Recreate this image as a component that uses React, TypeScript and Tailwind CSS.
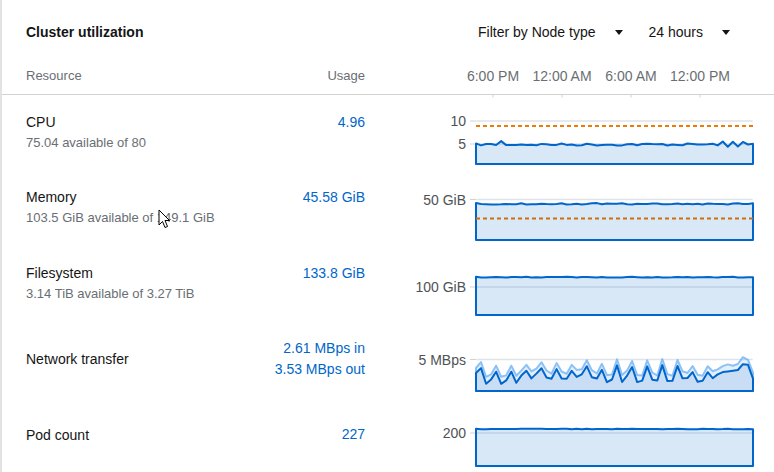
import React from 'react';

const X0 = 76;
const X1 = 353;
const BLUE = '#0066cc';

// deterministic noise so the charts look the same on every render
function rng(seed: number) {
  let s = seed;
  return () => {
    s = (s * 16807) % 2147483647;
    return (s - 1) / 2147483646;
  };
}

function makeSeries(n: number, base: number, amp: number, seed: number, extras: Record<number, number> = {}) {
  const r = rng(seed);
  return Array.from({ length: n }, (_, i) => base + (r() - 0.5) * 2 * amp + (extras[i] ?? 0));
}

function toPoints(ys: number[]) {
  const step = (X1 - X0) / (ys.length - 1);
  return ys.map((y, i) => `${(X0 + i * step).toFixed(1)},${y.toFixed(1)}`).join(' L');
}

function areaPath(ys: number[], bottom: number) {
  return `M${X0},${bottom} L${toPoints(ys)} L${X1},${bottom} Z`;
}

type Grid = { y: number; label: string };

type ChartProps = {
  grid: Grid[];
  series: { ys: number[]; stroke: string; opacity: number }[];
  threshold?: { y: number; color: string };
  ticks?: boolean;
  bottom?: number;
};

const Chart = ({ grid, series, threshold, ticks, bottom = 69 }: ChartProps) => (
  <svg width="374" height="75.5" className="block overflow-visible">
    {ticks &&
      [93, 162, 231, 300].map((x) => (
        <line key={x} x1={x} x2={x} y1={-1} y2={2.5} stroke="#d2d2d2" strokeWidth="1" />
      ))}
    {grid.map((g) => (
      <g key={g.label}>
        <line x1={70} x2={X0} y1={g.y} y2={g.y} stroke="#d2d2d2" strokeWidth="1" />
        <line x1={X0} x2={X1} y1={g.y} y2={g.y} stroke="#ececec" strokeWidth="1.5" />
        <text
          x={66}
          y={g.y + 5}
          textAnchor="end"
          fontSize="14"
          fill="#4f5255"
          fontFamily="'Liberation Sans', Arial, sans-serif"
        >
          {g.label}
        </text>
      </g>
    ))}
    {series.map((s, i) => (
      <path
        key={i}
        d={areaPath(s.ys, bottom)}
        fill={BLUE}
        fillOpacity={s.opacity}
        stroke={s.stroke}
        strokeWidth="2"
        strokeLinejoin="round"
      />
    ))}
    {grid.map((g) => (
      <line key={g.label + 'o'} x1={X0 + 1} x2={X1 - 1} y1={g.y} y2={g.y} stroke="#0066cc" strokeOpacity="0.06" strokeWidth="1.5" />
    ))}
    {threshold && (
      <line
        x1={X0}
        x2={X1}
        y1={threshold.y}
        y2={threshold.y}
        stroke={threshold.color}
        strokeWidth="2"
        strokeDasharray="4 3"
      />
    )}
  </svg>
);

const N = 56;
const cpu = makeSeries(N, 49.5, 1.1, 7, { 5: -3.5, 6: 1, 49: -2, 50: 2.5, 51: -2.5, 52: 1.5, 53: -3.5 });
const memory = makeSeries(N, 32.8, 0.7, 13);
const filesystem = makeSeries(N, 31.2, 0.4, 21);
const pods = makeSeries(N, 32, 0.3, 29);

const netIn = makeSeries(N, 54, 4, 41, { 50: -4, 51: -6, 52: -8, 53: -10, 54: -13, 55: 0 }).map((v, i) =>
  i > 49 ? v : i % 3 === 1 ? v - 7 : i % 3 === 2 ? v + 4 : v + 1,
);
const netOut = netIn.map((v, i) => v - 5 - ((i * 7) % 3));

type Row = {
  name: string;
  sub?: string;
  usage: string[];
  chart: ChartProps;
};

const rows: Row[] = [
  {
    name: 'CPU',
    sub: '75.04 available of 80',
    usage: ['4.96'],
    chart: {
      ticks: true,
      grid: [
        { y: 26, label: '10' },
        { y: 49, label: '5' },
      ],
      series: [{ ys: cpu, stroke: BLUE, opacity: 0.15 }],
      threshold: { y: 31, color: '#ec7a08' },
    },
  },
  {
    name: 'Memory',
    sub: '103.5 GiB available of 149.1 GiB',
    usage: ['45.58 GiB'],
    chart: {
      grid: [{ y: 28.5, label: '50 GiB' }],
      series: [{ ys: memory, stroke: BLUE, opacity: 0.15 }],
      threshold: { y: 47.5, color: '#d26d0b' },
    },
  },
  {
    name: 'Filesystem',
    sub: '3.14 TiB available of 3.27 TiB',
    usage: ['133.8 GiB'],
    chart: {
      grid: [{ y: 41, label: '100 GiB' }],
      series: [{ ys: filesystem, stroke: BLUE, opacity: 0.15 }],
    },
  },
  {
    name: 'Network transfer',
    usage: ['2.61 MBps in', '3.53 MBps out'],
    chart: {
      grid: [{ y: 37.5, label: '5 MBps' }],
      series: [
        { ys: netOut, stroke: '#8bc1f7', opacity: 0.1 },
        { ys: netIn, stroke: BLUE, opacity: 0.12 },
      ],
    },
  },
  {
    name: 'Pod count',
    usage: ['227'],
    chart: {
      grid: [{ y: 36, label: '200' }],
      series: [{ ys: pods, stroke: BLUE, opacity: 0.15 }],
    },
  },
];

const Caret = () => (
  <svg width="8" height="5" viewBox="0 0 8 5" className="ml-[19px] shrink-0">
    <path d="M0 0 H8 L4 5 Z" fill="#151515" />
  </svg>
);

export default function App() {
  return (
    <div
      className="relative w-[774px] h-[472px] overflow-hidden bg-white border-l-2 border-[#e2e2e2] text-[#151515]"
      style={{ fontFamily: "'Liberation Sans', Arial, sans-serif" }}
    >
      {/* Card header */}
      <div className="flex items-center h-[64px] pl-6 pr-[44px]">
        <h2 className="text-[14px] font-bold leading-5">Cluster utilization</h2>
        <div className="ml-auto flex items-center text-[14px] leading-5">
          <button className="flex items-center">
            <span>Filter by Node type</span>
            <Caret />
          </button>
          <button className="flex items-center ml-[26px]">
            <span>24 hours</span>
            <Caret />
          </button>
        </div>
      </div>

      {/* Column headers */}
      <div className="flex h-[31px] pl-6 pt-[2px] border-b border-[#d2d2d2] text-[#6a6e73] leading-5">
        <div className="flex-1 text-[13px]">Resource</div>
        <div className="w-[115px] text-right text-[13px]">Usage</div>
        <div className="ml-[35px] w-[374px] flex pl-[58.5px] text-[14px]">
          {['6:00 PM', '12:00 AM', '6:00 AM', '12:00 PM'].map((t) => (
            <span key={t} className="w-[69px] text-center whitespace-nowrap">
              {t}
            </span>
          ))}
        </div>
      </div>

      {/* Rows */}
      {rows.map((row) => (
        <div key={row.name} className="flex items-center h-[75.5px] pl-6">
          <div className="flex-1 flex items-stretch">
            <div className="flex-1 flex flex-col justify-center">
              <div className="text-[14px] leading-5">{row.name}</div>
              {row.sub && <div className="text-[13px] leading-[22px] text-[#6a6e73]">{row.sub}</div>}
            </div>
            <div className="w-[115px] text-right text-[14px] leading-[21px] text-[#0066cc]">
              {row.usage.map((u) => (
                <div key={u}>{u}</div>
              ))}
            </div>
          </div>
          <div className="ml-[35px] w-[374px] self-stretch">
            <Chart {...row.chart} />
          </div>
        </div>
      ))}

      {/* mouse pointer captured in the screenshot */}
      <svg
        width="13"
        height="21"
        viewBox="0 0 13 21"
        className="absolute left-[156px] top-[209px] pointer-events-none"
      >
        <path d="M1 1 L1 16 L4.5 12.5 L7 18.5 L9.5 17.5 L7 11.5 L11.5 11.5 Z" fill="#fff" stroke="#000" strokeWidth="1" strokeLinejoin="round" />
      </svg>
    </div>
  );
}
